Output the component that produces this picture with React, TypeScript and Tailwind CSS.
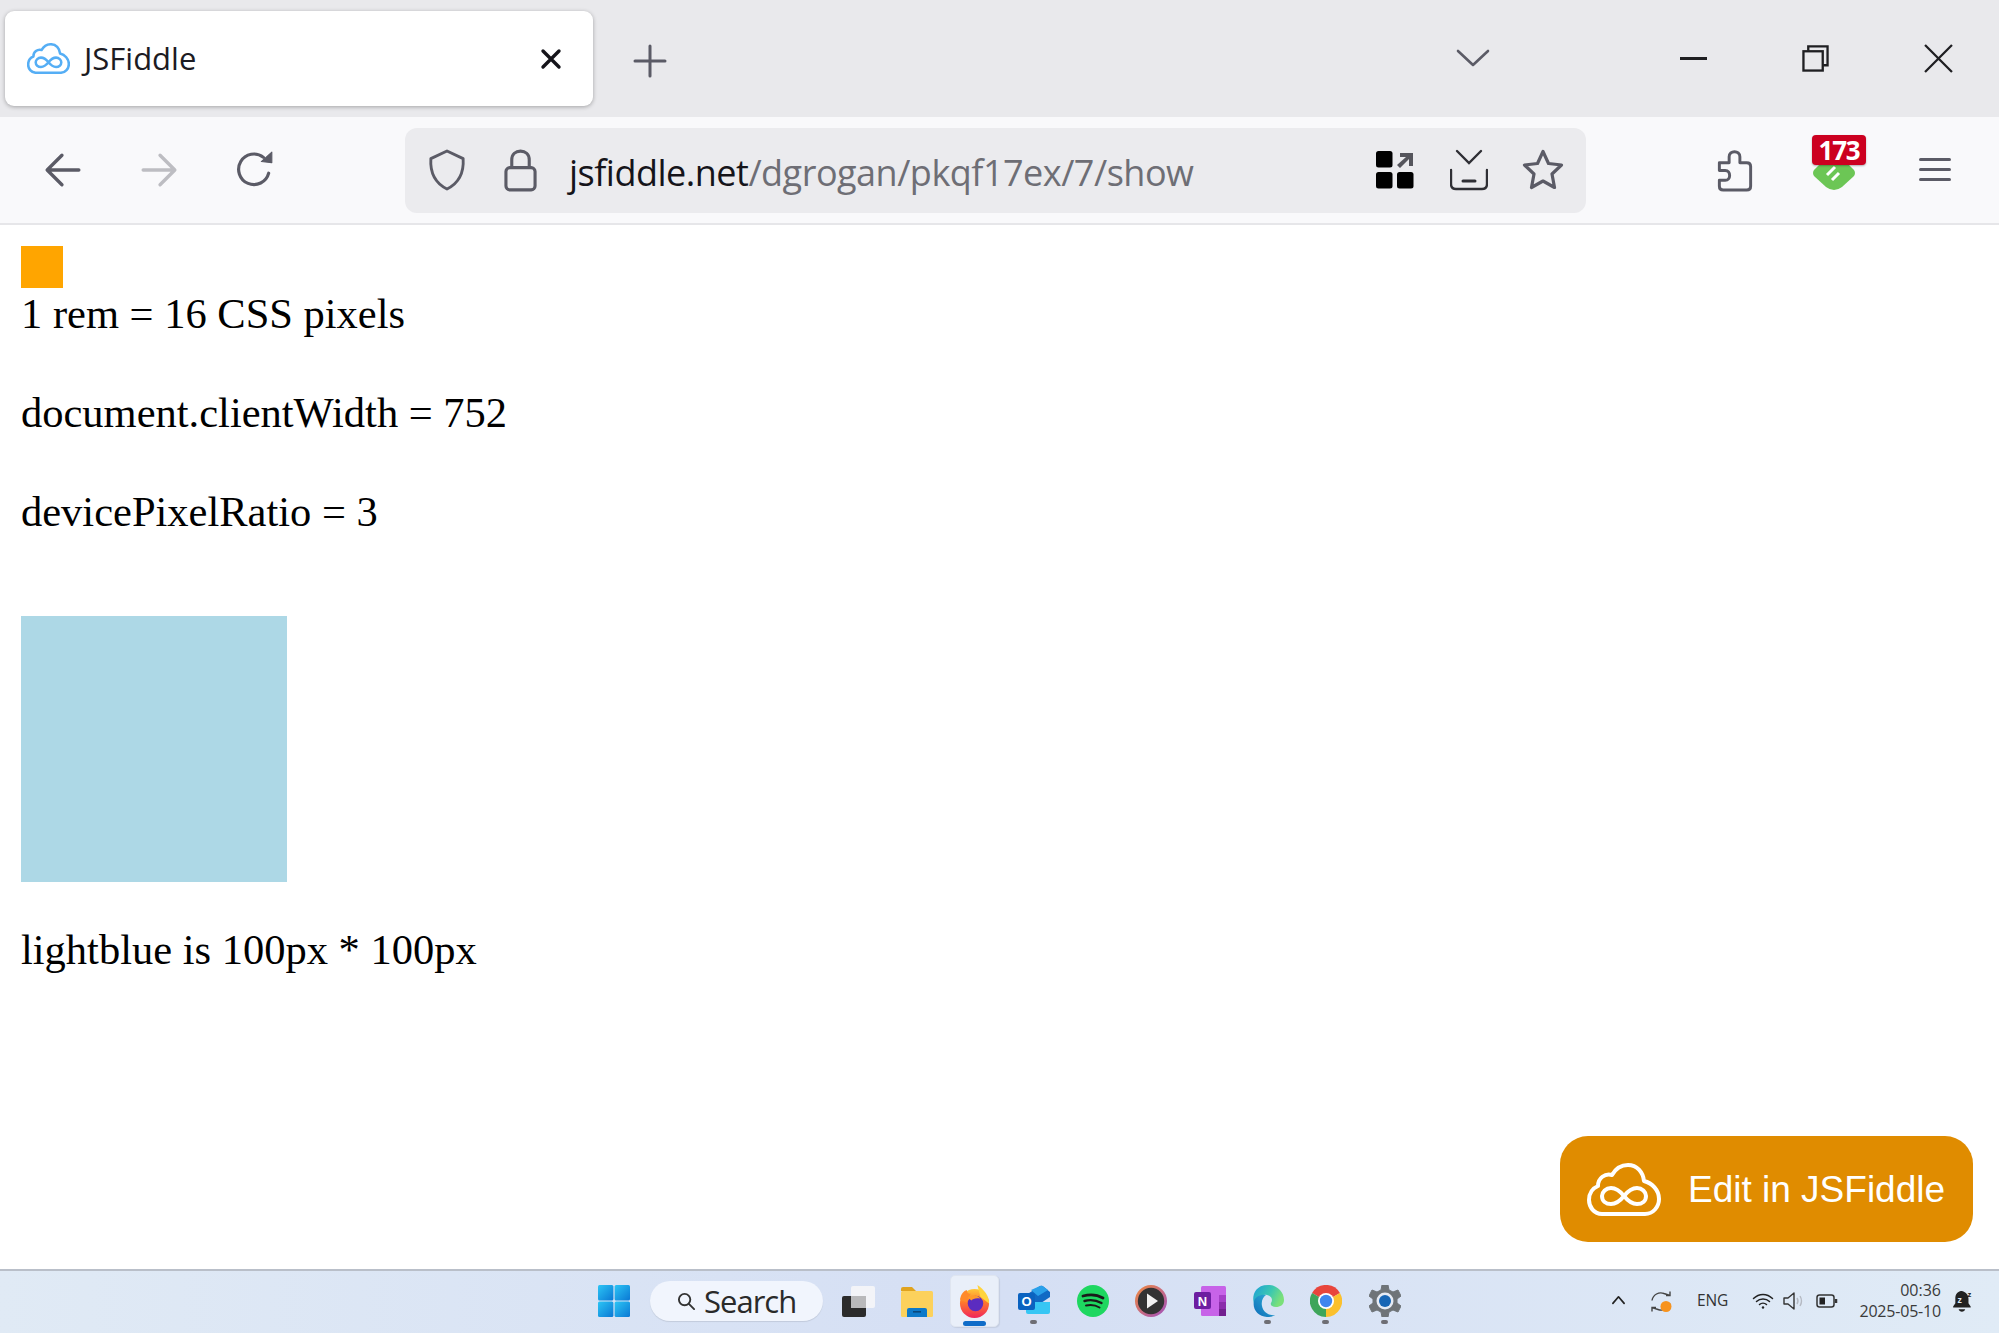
import React from "react";

const Cloud = ({ className, stroke, sw = 3.4 }: { className: string; stroke: string; sw?: number }) => (
  <svg viewBox="0 0 74 53" className={className} fill="none" stroke={stroke} strokeWidth={sw} strokeLinejoin="round">
    <path d="M15 51 C7 51 2 44 2 37 C2 30 6 25 11 23 C11 15 18 10 25 12 C29 5 35 2 41 2 C50 2 56 9 57 18 C65 20 72 27 72 36 C72 44 66 51 58 51 Z" />
    <path d="M37 33 C33 28 29 25 24 25 C19 25 15 29 15 33 C15 38 19 41 24 41 C29 41 33 38 37 33 C41 28 45 25 50 25 C55 25 59 29 59 33 C59 38 55 41 50 41 C45 41 41 38 37 33 Z" />
  </svg>
);

const Line = ({ d, className, color = "#5b5b66", w = 3, box = 36 }: { d: string; className: string; color?: string; w?: number; box?: number }) => (
  <svg viewBox={`0 0 ${box} ${box}`} className={className} fill="none" stroke={color} strokeWidth={w} strokeLinecap="round" strokeLinejoin="round">
    <path d={d} />
  </svg>
);

const Windows = () => (
  <svg viewBox="0 0 32 32" className="w-[32px] h-[32px]">
    <defs>
      <linearGradient id="wg" x1="0" y1="0" x2="1" y2="1">
        <stop offset="0" stopColor="#2cc5f5" />
        <stop offset="1" stopColor="#0a78d4" />
      </linearGradient>
    </defs>
    <rect x="0" y="0" width="15.4" height="15.4" rx="1.5" fill="url(#wg)" />
    <rect x="16.6" y="0" width="15.4" height="15.4" rx="1.5" fill="url(#wg)" />
    <rect x="0" y="16.6" width="15.4" height="15.4" rx="1.5" fill="url(#wg)" />
    <rect x="16.6" y="16.6" width="15.4" height="15.4" rx="1.5" fill="url(#wg)" />
  </svg>
);

const TaskView = () => (
  <svg viewBox="0 0 33 31" className="w-[33px] h-[31px]">
    <rect x="0" y="10" width="24" height="21" rx="2" fill="#2b2b2b" />
    <rect x="9" y="0" width="24" height="22" rx="2" fill="#f3f4f8" />
    <rect x="9" y="10" width="15" height="12" fill="#b9b9bb" />
  </svg>
);

const Folder = () => (
  <svg viewBox="0 0 32 31" className="w-[32px] h-[31px]">
    <path d="M0 3 Q0 1 2 1 H11 L15 5 H0 Z" fill="#e0a31f" />
    <rect x="0" y="5" width="32" height="26" rx="1.5" fill="#fcd15c" />
    <path d="M6 31 V24 Q6 22 8 22 H24 Q26 22 26 24 V31 Z" fill="#0c79c9" />
    <rect x="12" y="25" width="8" height="1.6" fill="#07487d" />
  </svg>
);

const Firefox = () => (
  <svg viewBox="0 0 32 34" className="w-[31px] h-[33px]">
    <defs>
      <linearGradient id="ffa" x1="0.5" y1="0" x2="0.5" y2="1">
        <stop offset="0" stopColor="#ffc93a" />
        <stop offset="0.45" stopColor="#ff7a2b" />
        <stop offset="1" stopColor="#f0255c" />
      </linearGradient>
    </defs>
    <circle cx="16" cy="19" r="15" fill="url(#ffa)" />
    <path d="M19 0 C26 5 31 11 31 19 L22 12 Z" fill="#ffd43c" />
    <path d="M1 15 C2 9 5 6 8 5 C8 8 10 9 12 9 L8 18 Z" fill="#ff8a2b" />
    <circle cx="17" cy="19" r="8" fill="#5b2cc0" />
    <path d="M9 13 C13 9 20 10 22 14 C18 13 14 14 13 16 Z" fill="#ff9a2b" />
  </svg>
);

const Outlook = () => (
  <svg viewBox="0 0 32 32" className="w-[32px] h-[32px]">
    <path d="M8 10 L22 1 Q24 0 26 2 L32 7 V12 L20 20 Z" fill="#1169c4" />
    <path d="M13 5 L22 1 Q24 0 26 2 L30 5 L20 11 Z" fill="#2aa0ea" />
    <path d="M8 17 H32 V27 Q32 29 30 29 H10 Q8 29 8 27 Z" fill="#37c6f4" />
    <rect x="0" y="8" width="17" height="17" rx="2" fill="#0a62c0" />
    <text x="8.5" y="21" textAnchor="middle" fontSize="13" fontWeight="700" fontFamily="Liberation Sans" fill="#fff">O</text>
  </svg>
);

const Spotify = () => (
  <svg viewBox="0 0 32 32" className="w-[32px] h-[32px]" fill="none">
    <circle cx="16" cy="16" r="16" fill="#1ed760" />
    <path d="M6 11 C13 9 20 9.5 26 13" stroke="#1a1a1a" strokeWidth="2.8" strokeLinecap="round" />
    <path d="M7.5 16 C13 14.5 19 15 24.5 18" stroke="#1a1a1a" strokeWidth="2.4" strokeLinecap="round" />
    <path d="M9 20.5 C14 19.5 18.5 20 22.5 22.5" stroke="#1a1a1a" strokeWidth="2" strokeLinecap="round" />
  </svg>
);

const Player = () => (
  <svg viewBox="0 0 32 32" className="w-[32px] h-[32px]">
    <defs>
      <linearGradient id="plg" x1="0" y1="0" x2="1" y2="1">
        <stop offset="0" stopColor="#f08a3c" />
        <stop offset="1" stopColor="#a04fc0" />
      </linearGradient>
    </defs>
    <circle cx="16" cy="16" r="16" fill="url(#plg)" />
    <circle cx="16" cy="16" r="13.2" fill="#333" />
    <path d="M12 8.5 L23 16 L12 23.5 Z" fill="#f2f2f2" />
  </svg>
);

const OneNote = () => (
  <svg viewBox="0 0 32 32" className="w-[32px] h-[32px]">
    <rect x="7" y="1" width="25" height="30" rx="1.5" fill="#c763e8" />
    <rect x="25" y="10" width="7" height="7" fill="#a53fc7" />
    <rect x="25" y="17" width="7" height="7" fill="#8b2cab" />
    <rect x="25" y="24" width="7" height="7" fill="#72208f" />
    <rect x="0" y="7" width="17" height="17" rx="2" fill="#6d1ea1" />
    <text x="8.5" y="20.5" textAnchor="middle" fontSize="13" fontWeight="700" fontFamily="Liberation Sans" fill="#fff">N</text>
  </svg>
);

const Edge = () => (
  <svg viewBox="0 0 32 32" className="w-[32px] h-[32px]">
    <defs>
      <linearGradient id="eg1" x1="0" y1="1" x2="1" y2="0">
        <stop offset="0" stopColor="#0f6bb8" />
        <stop offset="1" stopColor="#2fb5d8" />
      </linearGradient>
      <linearGradient id="eg2" x1="0" y1="0" x2="1" y2="0.4">
        <stop offset="0" stopColor="#1b9fd8" />
        <stop offset="0.6" stopColor="#3cc8b0" />
        <stop offset="1" stopColor="#7be07a" />
      </linearGradient>
    </defs>
    <path d="M16 0 C25 0 32 7 32 15 C32 20 28 22 24 22 C20 22 18 20 19 18 C21 15 20 11 15 10 C9 9 4 13 2 18 C0 14 1 0 16 0 Z" fill="url(#eg2)" />
    <path d="M2 16 C4 11 9 9 14 10 C11 12 9 16 10 21 C11 27 17 31 23 30 C20 32 17 32 15 32 C6 32 0 24 2 16 Z" fill="url(#eg1)" />
  </svg>
);

const Chrome = () => (
  <svg viewBox="0 0 32 32" className="w-[32px] h-[32px]">
    <path d="M16 16 L2.1 8 A16 16 0 0 1 29.9 8 Z" fill="#e8453c" />
    <path d="M16 16 L29.9 8 A16 16 0 0 1 16 32 Z" fill="#fbc02d" />
    <path d="M16 16 L16 32 A16 16 0 0 1 2.1 8 Z" fill="#3ea55a" />
    <circle cx="16" cy="16" r="8" fill="#fff" />
    <circle cx="16" cy="16" r="6.2" fill="#3f86ee" />
  </svg>
);

const Gear = () => (
  <svg viewBox="0 0 32 32" className="w-[32px] h-[32px]">
    <path
      d="M13 0 H19 L20 5 L24 7 L29 5 L32 11 L28 14 V18 L32 21 L29 27 L24 25 L20 27 L19 32 H13 L12 27 L8 25 L3 27 L0 21 L4 18 V14 L0 11 L3 5 L8 7 L12 5 Z"
      fill="#6f7478"
      stroke="#6f7478"
      strokeLinejoin="round"
    />
    <circle cx="16" cy="16" r="8.5" fill="#e6ebf4" />
    <circle cx="16" cy="16" r="6" fill="#1766b5" />
  </svg>
);

const Dock = ({ children, dot }: { children: React.ReactNode; dot?: boolean }) => (
  <div className="relative w-[32px] h-[33px] flex items-center justify-center">
    {children}
    {dot && <span className="absolute left-[12px] top-[35px] w-[7px] h-[4px] rounded-full bg-[#6e6e74]" />}
  </div>
);

export default function App() {
  return (
    <div className="w-[1999px] h-[1333px] flex flex-col overflow-hidden bg-white" style={{ fontFamily: '"Open Sans", sans-serif' }}>
      {/* Title bar */}
      <div className="h-[117px] bg-[#e9e9ec] flex items-start shrink-0">
        <div className="mt-[11px] ml-[5px] w-[588px] h-[95px] bg-white rounded-[9px] shadow-[0_1px_4px_rgba(0,0,0,0.3)] flex items-center pl-[22px] pr-[31px]">
          <Cloud className="w-[43px] h-[31px]" stroke="#55aef5" sw={4.4} />
          <span className="ml-[14px] text-[31px] leading-none text-[#1c1b22]">JSFiddle</span>
          <svg viewBox="0 0 22 22" className="ml-auto w-[22px] h-[22px]" stroke="#15141a" strokeWidth="3.4" strokeLinecap="round">
            <path d="M3 3 L19 19 M19 3 L3 19" />
          </svg>
        </div>
        <svg viewBox="0 0 34 34" className="mt-[44px] ml-[40px] w-[34px] h-[34px]" stroke="#5b5b66" strokeWidth="3" strokeLinecap="round">
          <path d="M17 2 V32 M2 17 H32" />
        </svg>
        <svg viewBox="0 0 34 18" className="mt-[49px] ml-[789px] w-[34px] h-[18px]" fill="none" stroke="#5b5b66" strokeWidth="2.6" strokeLinecap="round" strokeLinejoin="round">
          <path d="M2 2 L17 16 L32 2" />
        </svg>
        <div className="ml-[190px] mt-[57px] w-[27px] h-[3px] bg-[#1f1f22]" />
        <svg viewBox="0 0 28 28" className="ml-[95px] mt-[45px] w-[27px] h-[27px]" fill="none" stroke="#1f1f22" strokeWidth="2.4">
          <rect x="1.5" y="6.5" width="20" height="20" />
          <path d="M6.5 6 V1.5 H26.5 V21 H22" />
        </svg>
        <svg viewBox="0 0 28 28" className="ml-[95px] mt-[44px] w-[29px] h-[29px]" stroke="#1f1f22" strokeWidth="2.2">
          <path d="M1 1 L27 27 M27 1 L1 27" />
        </svg>
      </div>

      {/* Nav bar */}
      <div className="h-[108px] bg-[#f9f9fb] border-b-2 border-[#e6e6e9] flex items-center shrink-0 relative">
        <Line d="M33 18 H4 M17 4 L3 18 L17 32" className="ml-[44px] w-[38px] h-[38px]" w={3.2} />
        <Line d="M3 18 H32 M19 4 L33 18 L19 32" className="ml-[58px] w-[38px] h-[38px]" color="#bdbdc2" w={3.2} />
        <svg viewBox="0 0 38 38" className="ml-[57px] w-[40px] h-[40px]" fill="none" stroke="#5b5b66" strokeWidth="3" strokeLinecap="round">
          <path d="M32 22 A14.5 14.5 0 1 1 27 7" />
          <path d="M25 11 L35 12 L35 2 Z" fill="#5b5b66" strokeWidth="1" strokeLinejoin="round" />
        </svg>
        <div className="ml-[130px] w-[1181px] h-[85px] bg-[#ebebee] rounded-[12px] flex items-center">
          <svg viewBox="0 0 40 44" className="ml-[23px] w-[38px] h-[42px]" fill="none" stroke="#5b5b66" strokeWidth="3" strokeLinejoin="round">
            <path d="M20 2 L37 10 C38 26 32 36 20 42 C8 36 2 26 3 10 Z" />
          </svg>
          <svg viewBox="0 0 34 44" className="ml-[38px] w-[33px] h-[43px]" fill="none" stroke="#5b5b66" strokeWidth="3.2">
            <path d="M8 19 V11 C8 5 12 2 17 2 C22 2 26 5 26 11 V19" />
            <rect x="2" y="19" width="30" height="23" rx="4" />
          </svg>
          <span className="ml-[32px] mt-[6px] text-[36px] leading-none tracking-[-0.5px] text-[#15141a] whitespace-nowrap">
            jsfiddle.net<span className="text-[#6e6e75]">/dgrogan/pkqf17ex/7/show</span>
          </span>
          <svg viewBox="0 0 38 38" className="ml-auto w-[38px] h-[40px]" fill="#000">
            <rect x="0" y="0" width="16.5" height="16.5" rx="2.5" />
            <rect x="0" y="21" width="16.5" height="16.5" rx="2.5" />
            <rect x="21" y="21" width="16.5" height="16.5" rx="2.5" />
            <path d="M24 2 H37 V15 H33 V8 L24 17 L21 14 L30 6 H24 Z" fill="#55555c" />
          </svg>
          <svg viewBox="0 0 38 42" className="ml-[36px] w-[38px] h-[42px]" fill="none" stroke="#2f2f35" strokeWidth="2.4" strokeLinecap="round">
            <path d="M7 2 L19 14 L31 2" />
            <path d="M1 21 V35 Q1 40 6 40 H32 Q37 40 37 35 V21" />
            <path d="M13 32 H25" strokeWidth="3" />
          </svg>
          <svg viewBox="0 0 42 42" className="ml-[34px] mr-[22px] w-[42px] h-[42px]" fill="none" stroke="#5b5b66" strokeWidth="3.2" strokeLinejoin="round">
            <path d="M21 2.5 L26.5 14.5 L39.5 16 L30 25 L32.5 38.5 L21 32 L9.5 38.5 L12 25 L2.5 16 L15.5 14.5 Z" />
          </svg>
        </div>
        <svg viewBox="0 0 36 44" className="ml-[131px] w-[36px] h-[43px]" fill="none" stroke="#5b5b66" strokeWidth="3" strokeLinejoin="round">
          <path d="M2 14 H12 V8 C12 1 23 1 23 8 V14 H30 Q34 14 34 18 V38 Q34 42 30 42 H6 Q2 42 2 38 V32 H8 C14 32 14 22 8 22 H2 Z" />
        </svg>
        <div className="relative ml-[59px] w-[44px] h-[44px] mt-[14px]">
          <svg viewBox="0 0 44 44" className="w-[44px] h-[44px] -mt-[9px]">
            <path d="M20 6 Q22 4 24 6 L42 24 Q44 27 42 30 L30 41 Q22 47 14 41 L2 30 Q0 27 2 24 Z" fill="#6cc655" />
            <path d="M23 21 L15 29 M27 27 L20 34" stroke="#fff" strokeWidth="3" />
          </svg>
          <span className="absolute left-[0px] top-[-20px] w-[54px] h-[30px] rounded-[4px] bg-[#cc0020] text-white text-[26px] font-bold leading-[30px] text-center tracking-[-1.2px] shadow-[0_1px_2px_rgba(0,0,0,0.3)]" style={{ fontFamily: '"Noto Sans", sans-serif' }}>
            173
          </span>
        </div>
        <div className="ml-[63px] w-[32px] flex flex-col gap-[7px] -mt-[2px]">
          <span className="h-[3px] bg-[#5b5b66] rounded" />
          <span className="h-[3px] bg-[#5b5b66] rounded" />
          <span className="h-[3px] bg-[#5b5b66] rounded" />
        </div>
      </div>

      {/* Page */}
      <div className="flex-1 relative pl-[21px] pt-[21px] text-[42.5px] leading-[49.4px] text-black" style={{ fontFamily: '"Liberation Serif", serif' }}>
        <div className="w-[42px] h-[42px] bg-[#ffa500]" />
        <div className="mt-[1px]">1 rem = 16 CSS pixels</div>
        <div className="mt-[50px]">document.clientWidth = 752</div>
        <div className="mt-[49px]">devicePixelRatio = 3</div>
        <div className="mt-[80px] w-[266px] h-[266px] bg-[#add8e6]" />
        <div className="mt-[43px]">lightblue is 100px * 100px</div>
        <div className="absolute left-[1560px] top-[911px] w-[413px] h-[106px] rounded-[28px] bg-[#e08c00] flex items-center pl-[27px] text-white" style={{ fontFamily: '"Liberation Sans", sans-serif' }}>
          <Cloud className="w-[74px] h-[53px]" stroke="#fff" sw={4} />
          <span className="ml-[27px] text-[37px] leading-none whitespace-nowrap">Edit in JSFiddle</span>
        </div>
      </div>

      {/* Taskbar */}
      <div className="h-[64px] shrink-0 border-t-2 border-[#b9bfc9] bg-gradient-to-r from-[#e0eaf5] via-[#d5dff4] to-[#e0ebf6] flex items-center pb-[2px]">
        <div className="ml-[598px]"><Windows /></div>
        <div className="ml-[20px] w-[173px] h-[40px] rounded-full bg-[#f1f5fd] shadow-[0_1px_1px_rgba(0,0,0,0.1)] flex items-center pl-[27px]">
          <svg viewBox="0 0 20 20" className="w-[19px] h-[19px]" fill="none" stroke="#333" strokeWidth="2">
            <circle cx="8" cy="8" r="6" />
            <path d="M12.5 12.5 L18 18" strokeLinecap="round" />
          </svg>
          <span className="ml-[8px] text-[31px] leading-none text-[#2a2a2a] tracking-[-1px]">Search</span>
        </div>
        <div className="ml-[19px]"><TaskView /></div>
        <div className="ml-[26px]"><Folder /></div>
        <div className="ml-[17px] relative w-[49px] h-[52px] rounded-[5px] bg-[#e9eff9] border border-[#dfe5f0] flex items-center justify-center shadow-[1px_1px_1px_rgba(0,0,0,0.08)]">
          <Firefox />
          <span className="absolute left-[12px] bottom-[0px] w-[23px] h-[5px] rounded-full bg-[#0f6cc8]" />
        </div>
        <div className="ml-[19px]"><Dock dot><Outlook /></Dock></div>
        <div className="ml-[27px]"><Dock><Spotify /></Dock></div>
        <div className="ml-[26px]"><Dock><Player /></Dock></div>
        <div className="ml-[27px]"><Dock><OneNote /></Dock></div>
        <div className="ml-[26px]"><Dock dot><Edge /></Dock></div>
        <div className="ml-[26px]"><Dock dot><Chrome /></Dock></div>
        <div className="ml-[27px]"><Dock dot><Gear /></Dock></div>

        {/* Tray */}
        <Line d="M2 10 L8 3 L14 10" box={16} w={1.8} color="#222" className="ml-[210px] w-[15px] h-[15px]" />
        <svg viewBox="0 0 22 22" className="ml-[24px] w-[22px] h-[23px]" fill="none" stroke="#444" strokeWidth="1.4">
          <path d="M2 10 C3 4 9 1 14 3 L20 5 M20 1 V5 H16" />
          <path d="M20 13 C19 18 13 21 8 19 L2 17 M2 21 V17 H6" />
          <circle cx="16" cy="16" r="5.5" fill="#f7931e" stroke="none" />
        </svg>
        <span className="ml-[25px] text-[15.5px] leading-none text-[#333] tracking-[-0.2px]">ENG</span>
        <svg viewBox="0 0 22 18" className="ml-[24px] w-[22px] h-[18px]" fill="none" stroke="#222" strokeWidth="1.5" strokeLinecap="round">
          <path d="M1.5 6.5 C7 1 15 1 20.5 6.5 M4.5 9.5 C8 6 14 6 17.5 9.5 M7.5 12.5 C9.5 10.7 12.5 10.7 14.5 12.5" />
          <circle cx="11" cy="15.5" r="1.2" fill="#222" stroke="none" />
        </svg>
        <svg viewBox="0 0 22 18" className="ml-[9px] w-[22px] h-[18px]" fill="none" stroke="#333" strokeWidth="1.4" strokeLinejoin="round">
          <path d="M1 6 H5 L11 1 V17 L5 12 H1 Z" />
          <path d="M14 6 Q16 9 14 12 M17 4 Q20 9 17 14" stroke="#b5b9c2" />
        </svg>
        <svg viewBox="0 0 22 14" className="ml-[11px] w-[22px] h-[14px]" fill="none" stroke="#333" strokeWidth="1.5">
          <rect x="1" y="1" width="17" height="12" rx="2.5" />
          <rect x="3.5" y="3.5" width="5.5" height="7" fill="#222" stroke="none" />
          <path d="M20 5 V9" strokeWidth="2.5" />
        </svg>
        <div className="ml-[15px] w-[88px] flex flex-col items-end text-[16px] leading-[21px] text-[#3a3a3a]">
          <span>00:36</span>
          <span className="tracking-[-0.2px] whitespace-nowrap">2025-05-10</span>
        </div>
        <svg viewBox="0 0 20 21" className="ml-[11px] w-[22px] h-[23px]">
          <path d="M8 1 C4 2 3 5 3 8 V12 L1 15 V16 H17 V15 L15 12 V8 C15 5 13 2 9 1 Z" fill="#222" />
          <path d="M6 17.5 H12 C11.5 20.5 6.5 20.5 6 17.5 Z" fill="#222" />
          <text x="5" y="12" fontSize="8" fontWeight="700" fontFamily="Liberation Sans" fill="#e0ebf6">z</text>
          <text x="14" y="6" fontSize="7" fontWeight="700" fontFamily="Liberation Sans" fill="#222">z</text>
        </svg>
      </div>
    </div>
  );
}
